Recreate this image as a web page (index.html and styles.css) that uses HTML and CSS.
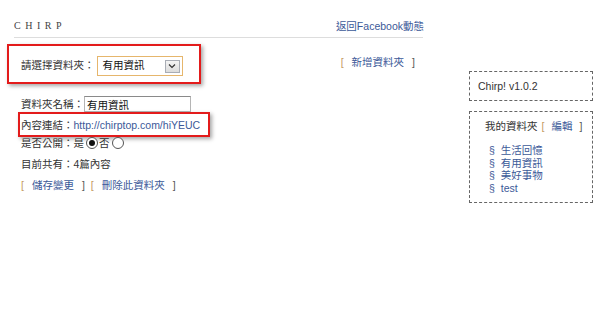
FILE: index.html
```html
<!DOCTYPE html>
<html lang="zh-Hant">
<head>
  <meta charset="UTF-8">
  <meta name="viewport" content="width=device-width, initial-scale=1.0">
  <title>Chirp</title>
  <link rel="stylesheet" href="styles.css">
</head>
<body>
  <div class="page">
    <div class="main">
      <div class="header">
        <span class="logo">CHIRP</span>
        <a class="fb-link" href="#">返回Facebook動態</a>
      </div>

      <div class="picker-row">
        <div class="highlight picker">
          <span class="picker-label">請選擇資料夾：</span>
          <div class="select">
            <span class="select-value">有用資訊</span>
            <span class="select-btn">
              <svg width="8" height="6" viewBox="0 0 8 6"><polyline points="1,1.5 4,4.5 7,1.5" fill="none" stroke="#333" stroke-width="1.2"/></svg>
            </span>
          </div>
        </div>
        <span class="bracket-link add-folder"><span class="lb">[</span><a href="#">新增資料夾</a><span class="rb">]</span></span>
      </div>

      <div class="folder-form">
        <div class="row name-row">
          <span>資料夾名稱：</span>
          <input class="name-input" type="text" value="有用資訊">
        </div>
        <div class="highlight link-row">內容連結：<a href="#">http://chirptop.com/hiYEUC</a></div>
        <div class="row radio-row">是否公開：是<span class="radio checked"></span>否<span class="radio"></span></div>
        <div class="row info-row">目前共有：4篇內容</div>
        <div class="row actions">
          <span class="bracket-link"><span class="lb">[</span><a href="#">儲存變更</a><span class="rb">]</span></span>
          <span class="bracket-link"><span class="lb">[</span><a href="#">刪除此資料夾</a><span class="rb">]</span></span>
        </div>
      </div>
    </div>

    <aside class="sidebar">
      <div class="side-box version">Chirp! v1.0.2</div>
      <div class="side-box folders">
        <div class="folders-title">我的資料夾<span class="bracket-link"><span class="lb">[</span><a href="#">編輯</a><span class="rb">]</span></span></div>
        <ul class="folder-list">
          <li><span class="sect">§</span><a href="#">生活回憶</a></li>
          <li><span class="sect">§</span><a href="#">有用資訊</a></li>
          <li><span class="sect">§</span><a href="#">美好事物</a></li>
          <li><span class="sect">§</span><a href="#">test</a></li>
        </ul>
      </div>
    </aside>
  </div>
</body>
</html>
```

FILE: styles.css
```css
body {
  margin: 0;
  font-family: "Liberation Sans", "Noto Sans CJK TC", sans-serif;
  font-size: 10.5px;
  line-height: 14px;
  color: #333;
  background-color: #fff;
}

a {
  color: #3b5998;
  text-decoration: none;
}

.page {
  display: flex;
  padding-left: 14px;
}

.main {
  width: 409px;
}

.header {
  display: flex;
  justify-content: space-between;
  padding: 19px 0 4px 0;
  border-bottom: 1px solid #ddd;
}

.logo {
  font-family: "Liberation Serif", serif;
  font-size: 10px;
  letter-spacing: 4.5px;
  color: #444;
}

.fb-link {
  margin-right: -1px;
}

.picker-row {
  display: flex;
  justify-content: space-between;
  align-items: flex-start;
  margin-top: 6px;
}

.highlight {
  border: 2px solid #e31b1b;
  box-shadow: 2px 2px 4px rgba(0, 0, 0, 0.35);
}

.picker {
  box-sizing: border-box;
  width: 194px;
  margin-left: -7px;
  display: flex;
  align-items: center;
  padding: 10px 0 6px 12px;
}

.picker-label {
  margin-right: 2px;
  position: relative;
  top: -1px;
}

.select {
  box-sizing: border-box;
  width: 86px;
  height: 20px;
  border: 1px solid #e6b66c;
  display: flex;
  align-items: center;
  justify-content: space-between;
  padding: 0 2px 0 5px;
}

.select-value {
  color: #111;
  position: relative;
  top: -1px;
}

.select-btn {
  box-sizing: border-box;
  width: 15px;
  height: 13px;
  border: 1px solid #a9adb5;
  background: linear-gradient(#f4f4f4, #dcdcdc);
  display: flex;
  align-items: center;
  justify-content: center;
}

.bracket-link .lb {
  color: #c49a62;
}

.bracket-link .rb {
  color: #555;
}

.bracket-link a {
  margin: 0 8px;
}

.add-folder {
  margin-top: 11px;
  margin-right: 8px;
}

.folder-form {
  margin-top: 12px;
  padding-left: 7px;
}

.row {
  display: flex;
  align-items: center;
  height: 14px;
}

.name-row {
  height: 16px;
}

.name-input {
  box-sizing: border-box;
  width: 107px;
  height: 16px;
  margin: 0;
  padding: 0 2px;
  border: 1px solid #b5b5b5;
  border-top-color: #8a8a8a;
  font: inherit;
  color: #111;
}

.link-row {
  display: inline-block;
  margin-left: -3px;
  padding: 4px 8px 3px 1px;
  margin-top: 0;
}

.radio-row {
  margin-top: -1px;
}

.radio {
  box-sizing: border-box;
  width: 12px;
  height: 12px;
  border: 1px solid #555;
  border-radius: 50%;
  margin: 0 1px 0 2px;
  position: relative;
  background: #fff;
}

.radio.checked::after {
  content: '';
  position: absolute;
  left: 2px;
  top: 2px;
  width: 6px;
  height: 6px;
  border-radius: 50%;
  background: #111;
}

.info-row {
  margin-top: 7px;
}

.actions {
  margin-top: 7px;
  gap: 6px;
}

.sidebar {
  margin-left: 46px;
  padding-top: 71px;
  width: 124px;
}

.side-box {
  border: 1px dashed #666;
}

.version {
  padding: 7px 8px;
}

.folders {
  margin-top: 10px;
  padding: 7px 0 8px 15px;
}

.folders-title .bracket-link {
  margin-left: 4px;
}

.folders-title .bracket-link a {
  margin: 0 7px;
}

.folder-list {
  list-style: none;
  margin: 11px 0 0 0;
  padding: 0 0 0 4px;
  line-height: 12.5px;
}

.sect {
  color: #3b5998;
  margin-right: 6px;
}
```
